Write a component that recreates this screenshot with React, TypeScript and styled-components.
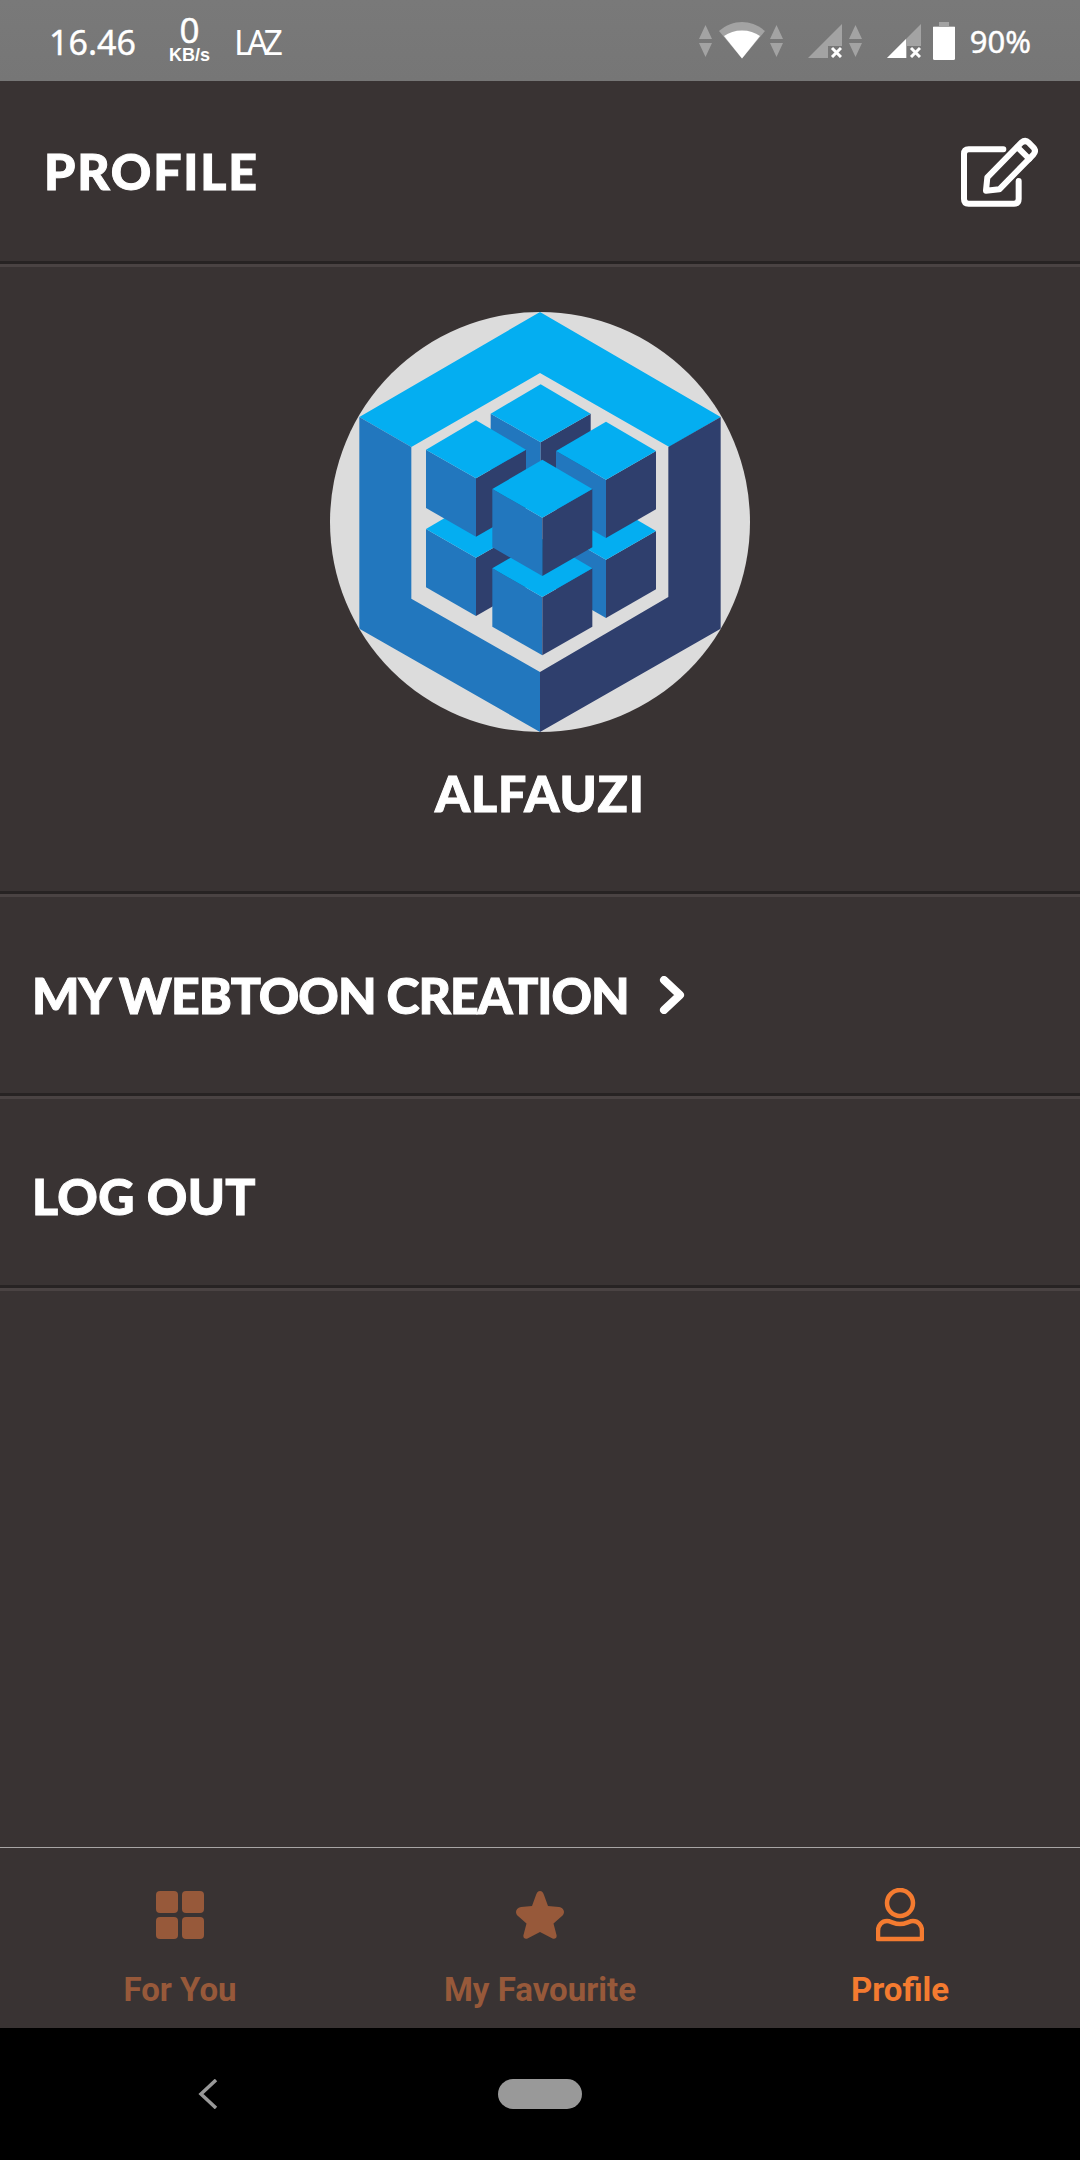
import React from 'react';
import styled, { createGlobalStyle } from 'styled-components';

const GlobalStyle = createGlobalStyle`
  html, body {
    margin: 0;
    padding: 0;
    background: #393333;
  }
  * {
    box-sizing: border-box;
  }
`;

const Screen = styled.div`
  width: 1080px;
  height: 2160px;
  display: flex;
  flex-direction: column;
  background: #393333;
  overflow: hidden;
`;

const StatusBar = styled.div`
  height: 81px;
  flex: none;
  display: flex;
  align-items: center;
  padding: 0 49px 0 49px;
  background: linear-gradient(#797979, #767676);
  color: #fff;
  font-family: 'Noto Sans', sans-serif;
  -webkit-text-stroke: 0.4px #fff;
`;

const Clock = styled.span`
  font-size: 34px;
  line-height: 1;
  margin-top: 3px;
`;

const Speed = styled.div`
  display: flex;
  flex-direction: column;
  align-items: center;
  margin-left: 31px;
  width: 45px;
`;

const SpeedValue = styled.span`
  font-size: 35px;
  line-height: 30px;
  margin-top: -4px;
`;

const SpeedUnit = styled.span`
  font-family: 'Liberation Sans', sans-serif;
  font-weight: 700;
  font-size: 18px;
  line-height: 16px;
  margin-top: 2px;
  -webkit-text-stroke: 0;
`;

const CarrierLogo = styled.span`
  font-size: 34px;
  line-height: 1;
  margin: 2px 0 0 22px;
  letter-spacing: -5px;
  font-weight: 400;
  -webkit-text-stroke: 0;
`;

const StatusIcons = styled.div`
  margin-left: auto;
  display: flex;
  align-items: center;
  height: 100%;
`;

const StatusIcon = styled.svg<{ $gap: number }>`
  display: block;
  flex: none;
  margin-left: ${(p) => p.$gap}px;
`;

const BatteryText = styled.span`
  font-size: 31px;
  line-height: 1;
  margin: 1px 0 0 15px;
`;

const Header = styled.header`
  height: 180px;
  flex: none;
  display: flex;
  align-items: center;
  justify-content: space-between;
  padding: 0 42px 0 44px;
`;

const ComicText = styled.span`
  font-family: Lato, 'Open Sans', sans-serif;
  font-weight: 900;
  font-size: 50px;
  line-height: 1;
  color: #fff;
  white-space: nowrap;
  -webkit-text-stroke: 1px #fff;
`;

const PageTitle = styled(ComicText)`
  letter-spacing: 1.8px;
`;

const Divider = styled.div`
  height: 6px;
  flex: none;
  background: #4a4343;
  border-top: 3px solid #272323;
`;

const ProfileBlock = styled.section`
  height: 624px;
  flex: none;
  display: flex;
  flex-direction: column;
  align-items: center;
  padding-top: 45px;
`;

const Avatar = styled.div`
  width: 420px;
  height: 420px;
  border-radius: 50%;
  background: #dcdcdc;
  overflow: hidden;
`;

const UserName = styled(ComicText)`
  margin-top: 36px;
  letter-spacing: 0.9px;
`;

const MenuRow = styled.div<{ $height: number; $offset: number }>`
  height: ${(p) => p.$height}px;
  flex: none;
  display: flex;
  align-items: center;
  padding: ${(p) => p.$offset}px 32px 0;
`;

const MenuLabel = styled(ComicText)<{ $spacing: number }>`
  letter-spacing: ${(p) => p.$spacing}px;
`;

const Chevron = styled.svg`
  display: block;
  margin-left: 30px;
`;

const Filler = styled.div`
  flex: 1;
`;

const BottomNav = styled.nav`
  height: 181px;
  flex: none;
  display: grid;
  grid-template-columns: repeat(3, 1fr);
  border-top: 1px solid #a8a5a5;
`;

const NavItem = styled.div<{ $active?: boolean }>`
  display: flex;
  flex-direction: column;
  align-items: center;
  color: ${(p) => (p.$active ? '#f47b30' : '#97593a')};
`;

const NavIconSlot = styled.div`
  height: 54px;
  margin-top: 40px;
  display: flex;
  align-items: center;
`;

const NavLabel = styled.span`
  font-family: Roboto, sans-serif;
  font-weight: 700;
  font-size: 33px;
  line-height: 38px;
  margin-top: 29px;
`;

const SystemBar = styled.div`
  height: 132px;
  flex: none;
  background: #000;
  display: grid;
  grid-template-columns: repeat(3, 1fr);
  align-items: start;
  justify-items: center;
  padding-top: 51px;
`;

const BackArrow = styled.svg`
  display: block;
  margin-left: 55px;
`;

const HomePill = styled.div`
  width: 84px;
  height: 30px;
  border-radius: 15px;
  background: #999;
`;

const SignalArrows = ({ gap }: { gap: number }) => (
  <StatusIcon $gap={gap} width="13" height="32" viewBox="0 0 13 32">
    <path d="M6.5 0L13 14H0zM0 18h13L6.5 32z" fill="#a3a3a3" />
  </StatusIcon>
);

const WifiIcon = () => (
  <StatusIcon $gap={7} width="46" height="37" viewBox="0 0 46 37">
    <path d="M23 36.5L0 9C7 3 15 0 23 0s16 3 23 9z" fill="#a3a3a3" />
    <path d="M23 36.5L5 14c5-3.500 11-5.500 18-5.500S36 10.500 41 14z" fill="#fff" />
  </StatusIcon>
);

const SimIcon = ({ gap, filled }: { gap: number; filled: boolean }) => (
  <StatusIcon $gap={gap} width="34" height="34" viewBox="0 0 34 34">
    <path d="M0 34L34 0v22H20v12z" fill="#a3a3a3" />
    {filled && <path d="M0 34L19 15v19z" fill="#fff" />}
    <path d="M24 24l9 9M33 24l-9 9" stroke="#fff" strokeWidth="3" />
  </StatusIcon>
);

const BatteryIcon = () => (
  <StatusIcon $gap={12} width="22" height="38" viewBox="0 0 22 38">
    <path d="M6 0h10v4h5a1 1 0 0 1 1 1v5H0V5a1 1 0 0 1 1-1h5z" fill="#a3a3a3" />
    <path d="M0 5h22v31.500a1.500 1.500 0 0 1-1.500 1.500h-19A1.500 1.500 0 0 1 0 36.500z" fill="#fff" />
  </StatusIcon>
);

const EditIcon = () => (
  <svg width="78" height="71" viewBox="900 405 234 213" fill="none" stroke="#fff" strokeWidth="18" strokeLinecap="round" strokeLinejoin="round">
    <path d="M1030 445H926q-14 0-14 14v135q0 14 14 14h136q14 0 14-14v-54" />
    <path d="M978 569l4-40 102-104q12-10 22 0l14 14q10 10 0 22l-102 104z" />
    <path d="M1072 438l36 36" />
  </svg>
);

interface CubeProps {
  cx: number;
  top: number;
}

// isometric cube: top face plus the two visible sides
const Cube = ({ cx, top }: CubeProps) => (
  <g>
    <path d={`M${cx - 150} ${top + 88}L${cx} ${top + 174}V${top + 349}L${cx - 150} ${top + 263}z`} fill="#2277be" />
    <path d={`M${cx + 150} ${top + 88}L${cx} ${top + 174}V${top + 349}L${cx + 150} ${top + 263}z`} fill="#2f3f6d" />
    <path d={`M${cx} ${top}L${cx + 150} ${top + 88}L${cx} ${top + 174}L${cx - 150} ${top + 88}z`} fill="#04aef1" />
  </g>
);

const SequelizeLogo = () => (
  <svg width="420" height="420" viewBox="60 65 1260 1260" style={{ display: 'block' }}>
    <path d="M690 65L1232 380L1078 470L690 248L304 470L148 380z" fill="#04aef1" />
    <path d="M148 380L304 470V925L690 1145V1325L148 1015z" fill="#2277be" />
    <path d="M1232 380V1015L690 1325V1145L1075 920V470z" fill="#2f3f6d" />
    <Cube cx={692} top={282} />
    <Cube cx={498} top={628} />
    <Cube cx={888} top={634} />
    <Cube cx={498} top={390} />
    <Cube cx={888} top={394} />
    <Cube cx={697} top={746} />
    <Cube cx={697} top={508} />
  </svg>
);

const GridIcon = () => (
  <svg width="48" height="48" viewBox="0 0 48 48" fill="currentColor">
    <rect x="0" y="0" width="22" height="22" rx="4" />
    <rect x="26" y="0" width="22" height="22" rx="4" />
    <rect x="0" y="26" width="22" height="22" rx="4" />
    <rect x="26" y="26" width="22" height="22" rx="4" />
  </svg>
);

const StarIcon = () => (
  <svg width="48" height="48" viewBox="0 0 48 48" fill="currentColor">
    <path d="M24 0c2 0 3 1.500 4 4l4 11 11 1c3.500.5 5 3 5 5 0 1.500-.8 3-2 4l-8.500 7.500 3 11.500c.7 3-1.500 4.500-4 3.500L24 41l-12.500 6.500c-2.500 1-4.700-.5-4-3.500l3-11.500L2 25c-1.200-1-2-2.500-2-4 0-2 1.500-4.500 5-5l11-1 4-11c1-2.500 2-4 4-4z" />
  </svg>
);

const PersonIcon = () => (
  <svg width="48" height="54" viewBox="0 0 48 54" fill="none" stroke="currentColor" strokeWidth="4.500">
    <circle cx="24" cy="15" r="13" />
    <path d="M2 51V43c0-6 4-10 9-10 4 0 7 3 13 3s9-3 13-3c5 0 9 4 9 10v8z" strokeLinejoin="round" />
  </svg>
);

export default function App() {
  return (
    <Screen>
      <GlobalStyle />
      <StatusBar>
        <Clock>16.46</Clock>
        <Speed>
          <SpeedValue>0</SpeedValue>
          <SpeedUnit>KB/s</SpeedUnit>
        </Speed>
        <CarrierLogo>LAZ</CarrierLogo>
        <StatusIcons>
          <SignalArrows gap={0} />
          <WifiIcon />
          <SignalArrows gap={5} />
          <SimIcon gap={25} filled={false} />
          <SignalArrows gap={7} />
          <SimIcon gap={25} filled />
          <BatteryIcon />
          <BatteryText>90%</BatteryText>
        </StatusIcons>
      </StatusBar>

      <Header>
        <PageTitle>PROFILE</PageTitle>
        <EditIcon />
      </Header>
      <Divider />

      <ProfileBlock>
        <Avatar>
          <SequelizeLogo />
        </Avatar>
        <UserName>ALFAUZI</UserName>
      </ProfileBlock>
      <Divider />

      <MenuRow $height={196} $offset={0}>
        <MenuLabel $spacing={-1}>MY WEBTOON CREATION</MenuLabel>
        <Chevron width="26" height="38" viewBox="0 0 26 38" fill="none" stroke="#fff" strokeWidth="8" strokeLinejoin="round" strokeLinecap="round">
          <path d="M5 4l16 15L5 34" />
        </Chevron>
      </MenuRow>
      <Divider />

      <MenuRow $height={186} $offset={8}>
        <MenuLabel $spacing={0.3}>LOG OUT</MenuLabel>
      </MenuRow>
      <Divider />

      <Filler />

      <BottomNav>
        <NavItem>
          <NavIconSlot>
            <GridIcon />
          </NavIconSlot>
          <NavLabel>For You</NavLabel>
        </NavItem>
        <NavItem>
          <NavIconSlot>
            <StarIcon />
          </NavIconSlot>
          <NavLabel>My Favourite</NavLabel>
        </NavItem>
        <NavItem $active>
          <NavIconSlot>
            <PersonIcon />
          </NavIconSlot>
          <NavLabel>Profile</NavLabel>
        </NavItem>
      </BottomNav>

      <SystemBar>
        <BackArrow width="20" height="30" viewBox="0 0 20 30" fill="none" stroke="#999" strokeWidth="3.500">
          <path d="M18 1L3 15l15 14" />
        </BackArrow>
        <HomePill />
        <span />
      </SystemBar>
    </Screen>
  );
}
